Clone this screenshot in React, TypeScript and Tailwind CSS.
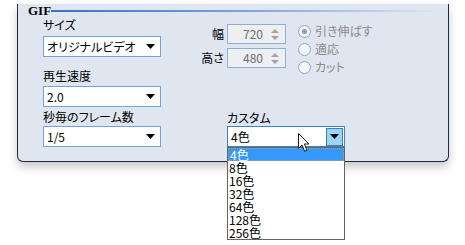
import React from 'react';

const font = "font-['Noto_Sans_CJK_JP','Noto_Sans',sans-serif] [font-feature-settings:'palt']";

function Arrow() {
  return (
    <svg width="9" height="5" viewBox="0 0 9 5" className="block">
      <path d="M0 0 H9 L4.5 5 Z" fill="#000" />
    </svg>
  );
}

function Select({ value }: { value: string }) {
  return (
    <div className="flex items-center h-[21px] w-[118px] border border-[#72a2da] bg-white pl-[3px] pr-[5px]">
      <span className="flex-1 text-[12px] leading-[19px] text-black">{value}</span>
      <Arrow />
    </div>
  );
}

function Spin({ value }: { value: string }) {
  return (
    <div className="flex items-center h-[20px] w-[59px] border border-[#8db0da] bg-[#eeeff1]">
      <span className="flex-1 text-right pr-[2px] text-[12px] leading-[18px] text-[#6e6e6e]">{value}</span>
      <div className="flex flex-col items-center gap-[3px] w-[20px]">
        <svg width="8" height="4" viewBox="0 0 8 4"><path d="M0 4 L4 0 L8 4 Z" fill="#a4a4a4" /></svg>
        <svg width="8" height="4" viewBox="0 0 8 4"><path d="M0 0 L8 0 L4 4 Z" fill="#a4a4a4" /></svg>
      </div>
    </div>
  );
}

function Radio({ label, checked }: { label: string; checked?: boolean }) {
  return (
    <div className="flex items-center h-[18px] gap-[4px]">
      <div className="flex items-center justify-center w-[13px] h-[13px] rounded-full border border-[#87a9d3] bg-[#f4f6f9]">
        {checked && <div className="w-[5px] h-[5px] rounded-full bg-[#9a9a9a]" />}
      </div>
      <span className="text-[12px] leading-[18px] text-[#8b8b8b]">{label}</span>
    </div>
  );
}

function Cursor() {
  return (
    <svg width="13" height="21" viewBox="0 0 13 21" className="absolute left-[70px] top-[21px] z-20">
      <path d="M1.5 1.5 L1.5 16.5 L5 13 L7.7 19.3 L10 18.3 L7.4 12 L12 12 Z" fill="#fff" stroke="#1a1a1a" strokeWidth="1" />
    </svg>
  );
}

const colors = ['4色', '8色', '16色', '32色', '64色', '128色', '256色'];

export default function App() {
  return (
    <div className={`w-[465px] h-[245px] bg-white overflow-hidden ${font}`}>
      <div className="ml-[17px] w-[432px] h-[158px] border-x border-b border-[#1b2a40] rounded-b-[6px] bg-[#dfe6f0] shadow-[0_5px_10px_rgba(0,0,0,0.22)]">
        <div className="flex items-center h-[14px] mt-[4px] pl-[10px] pr-[8px]">
          <span className="font-['Liberation_Serif',serif] font-bold text-[13px] leading-[14px] text-black">GIF</span>
          <div className="flex-1 h-[2px] bg-gradient-to-r from-[#3b6fc6] via-[#7ea3dc] to-[#dfe6f0]" />
        </div>
        <div className="flex pl-[25px]">
          <div className="flex flex-col w-[118px]">
            <span className="text-[12px] leading-[14px] h-[14px] text-black">サイズ</span>
            <div className="mt-[4px]"><Select value="オリジナルビデオ" /></div>
            <span className="mt-[12px] text-[12px] leading-[14px] h-[14px] text-black">再生速度</span>
            <div className="mt-[3px]"><Select value="2.0" /></div>
            <span className="mt-[3px] text-[12px] leading-[14px] h-[14px] text-black">秒毎のフレーム数</span>
            <div className="mt-[2px]"><Select value="1/5" /></div>
          </div>
          <div className="flex flex-col ml-[38px]">
            <div className="flex mt-[6px]">
              <div className="flex flex-col gap-[4px]">
                <div className="flex items-center">
                  <span className="w-[25px] text-right text-[12px] text-black">幅</span>
                  <div className="ml-[3px]"><Spin value="720" /></div>
                </div>
                <div className="flex items-center">
                  <span className="w-[25px] text-right text-[12px] text-black">高さ</span>
                  <div className="ml-[3px]"><Spin value="480" /></div>
                </div>
              </div>
              <div className="flex flex-col ml-[12px] -mt-[2px]">
                <Radio label="引き伸ばす" checked />
                <Radio label="適応" />
                <Radio label="カット" />
              </div>
            </div>
            <div className="relative ml-[28px] mt-[35px] flex flex-col">
              <span className="text-[12px] leading-[14px] h-[14px] text-black">カスタム</span>
              <div className="mt-[1px] flex items-center h-[21px] w-[118px] border border-[#3d83c4] bg-white pl-[3px] pr-[1px]">
                <span className="flex-1 text-[12px] leading-[19px] text-black">4色</span>
                <div className="flex items-center justify-center w-[17px] h-[18px] border border-[#3c7fb1] bg-[#9ad3f6]">
                  <Arrow />
                </div>
              </div>
              <Cursor />
              <div className="absolute left-0 top-[36px] w-[118px] border border-[#646464] bg-white z-10">
                {colors.map((c, i) => (
                  <div
                    key={c}
                    className={`h-[13px] pl-[1px] text-[12px] ${i === 0 ? 'bg-[#3399ff] text-white border border-dotted border-[#d39a4a] leading-[11px]' : 'text-black leading-[13px]'}`}
                  >
                    {c}
                  </div>
                ))}
              </div>
            </div>
          </div>
        </div>
      </div>
    </div>
  );
}
